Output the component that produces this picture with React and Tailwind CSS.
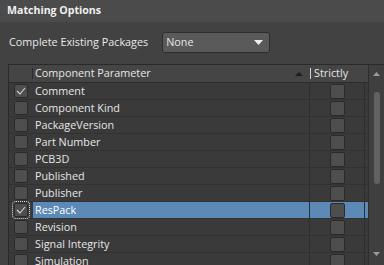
import React from "react";

const rows = [
  { name: "Comment", checked: true },
  { name: "Component Kind" },
  { name: "PackageVersion" },
  { name: "Part Number" },
  { name: "PCB3D" },
  { name: "Published" },
  { name: "Publisher" },
  { name: "ResPack", checked: true, selected: true },
  { name: "Revision" },
  { name: "Signal Integrity" },
  { name: "Simulation" },
];

function Check({ checked, focus, big }) {
  return (
    <div
      className={
        (big ? "w-[15px] h-[15px] " : "w-[14px] h-[14px] ") +
        "rounded-[2px] bg-[#4e4e4e] border border-[#2a2a2a] flex items-center justify-center " +
        (focus ? "outline outline-1 outline-dotted outline-[#e0e0e0] outline-offset-[1px]" : "")
      }
    >
      {checked && (
        <svg width="10" height="8" viewBox="0 0 10 8">
          <path d="M1 4 L4 7 L9 1" fill="none" stroke="#d8d8d8" strokeWidth="1.1" />
        </svg>
      )}
    </div>
  );
}

export default function App() {
  return (
    <div
      className="w-[384px] h-[265px] bg-[#424242] text-[#e6e6e6] overflow-hidden relative"
      style={{ fontFamily: '"Open Sans", "Noto Sans", sans-serif' }}
    >
      <div className="h-[22px] bg-[#4b4b4b] flex items-center pl-[7px] text-[10.6px] font-bold text-[#f0f0f0]">
        Matching Options
      </div>
      <div className="h-[42px] flex items-start pt-[10px] pl-[9px]">
        <div className="h-[21px] flex items-center text-[10.8px] text-[#e8e8e8]">Complete Existing Packages</div>
        <div className="ml-[14px] w-[108px] h-[21px] rounded-[3px] bg-[#5a5a5a] border border-[#2e2e2e] flex items-center pl-[3px] pr-[6px] justify-between text-[10.8px]">
          <span>None</span>
          <svg width="9" height="5" viewBox="0 0 9 5">
            <path d="M0 0 L9 0 L4.5 5 Z" fill="#eeeeee" />
          </svg>
        </div>
      </div>
      <div className="ml-[8px] flex border-t border-l border-[#2a2a2a] h-[201px]">
        <div className="flex-1 flex flex-col bg-[#3a3a3a]">
          <div className="h-[18px] shrink-0 flex bg-[#454545] border-b border-[#2c2c2c] text-[10.8px]">
            <div className="w-[24px] border-r border-[#2a2a2a] my-[3px]" />
            <div className="w-[277px] flex items-center pl-[2px] justify-between pr-[7px]">
              <span>Component Parameter</span>
              <svg width="8" height="4" viewBox="0 0 8 4">
                <path d="M0 4 L8 4 L4 0 Z" fill="#1e1e1e" />
              </svg>
            </div>
            <div className="w-[1px] bg-[#d0d0d0] my-[3px]" />
            <div className="flex items-center pl-[3px]">Strictly</div>
          </div>
          {rows.map((r) => (
            <div
              key={r.name}
              className={
                "h-[17px] shrink-0 flex border-b border-[#323232] text-[10.8px] " +
                (r.selected ? "bg-[#5c89b5] text-white" : "")
              }
            >
              <div className={"w-[24px] flex items-center justify-center " + (r.selected ? "bg-[#3a3a3a]" : "")}>
                <Check checked={r.checked} focus={r.selected} />
              </div>
              <div className="w-[277px] flex items-center pl-[2px] border-r border-[#2e2e2e]">{r.name}</div>
              <div className="w-[55px] flex items-center pl-[20px] border-r border-[#2e2e2e]">
                <Check big />
              </div>
            </div>
          ))}
        </div>
        <div className="w-[16px] bg-[#3f3f3f] border-l border-[#2e2e2e] relative flex flex-col items-center">
          <svg className="mt-[7px]" width="7" height="4" viewBox="0 0 7 4">
            <path d="M0 4 L7 4 L3.5 0 Z" fill="#9a9a9a" />
          </svg>
          <div className="mt-[16px] w-[6px] h-[92px] rounded-[3px] bg-[#626262]" />
          <svg className="absolute top-[187px]" width="7" height="4" viewBox="0 0 7 4">
            <path d="M0 0 L7 0 L3.5 4 Z" fill="#9a9a9a" />
          </svg>
        </div>
      </div>
    </div>
  );
}
